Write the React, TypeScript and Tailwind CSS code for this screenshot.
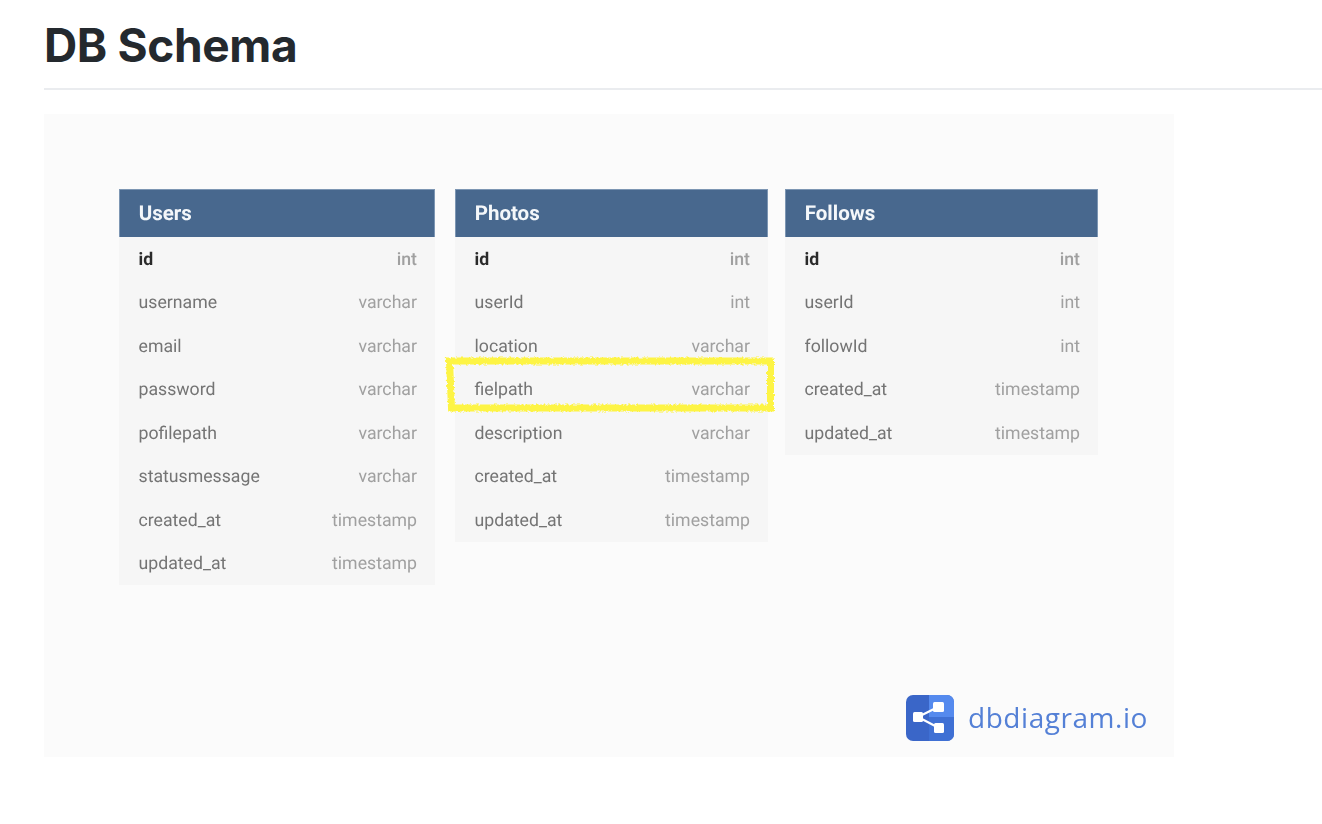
const tables = [
  {
    name: "Users",
    cls: "w-[316px]",
    rows: [
      ["id", "int"],
      ["username", "varchar"],
      ["email", "varchar"],
      ["password", "varchar"],
      ["pofilepath", "varchar"],
      ["statusmessage", "varchar"],
      ["created_at", "timestamp"],
      ["updated_at", "timestamp"],
    ],
  },
  {
    name: "Photos",
    cls: "w-[313px] ml-[20px]",
    rows: [
      ["id", "int"],
      ["userId", "int"],
      ["location", "varchar"],
      ["fielpath", "varchar"],
      ["description", "varchar"],
      ["created_at", "timestamp"],
      ["updated_at", "timestamp"],
    ],
  },
  {
    name: "Follows",
    cls: "w-[313px] ml-[17px]",
    rows: [
      ["id", "int"],
      ["userId", "int"],
      ["followId", "int"],
      ["created_at", "timestamp"],
      ["updated_at", "timestamp"],
    ],
  },
];

function Table({ t }: { t: (typeof tables)[number] }) {
  return (
    <div className={`${t.cls} self-start bg-[#f6f6f6] [text-rendering:geometricPrecision]`}>
      <div className="h-[48px] flex items-center pl-[18.7px] pt-[1px] bg-[#48688e] border border-[#7d96b3] border-b-0 text-[#f4f7fa] font-bold text-[20.5px]">
        <span className="blur-[0.6px]">{t.name}</span>
      </div>
      {t.rows.map(([a, b], i) => (
        <div key={i} className="h-[43.5px] flex items-center justify-between pl-[19.5px] pr-[18px] pt-[3px] text-[17.7px] blur-[0.6px]">
          <span className={i === 0 ? "font-bold text-[#2a2a2a]" : "text-[#747474]"}>{a}</span>
          <span className={i === 0 ? "text-[#a0a0a0] font-medium" : "text-[#a0a0a0]"}>{b}</span>
        </div>
      ))}
    </div>
  );
}

function Logo() {
  return (
    <svg width="48" height="46" viewBox="0 0 48 46" className="shrink-0 blur-[0.5px]">
      <defs>
        <clipPath id="c">
          <rect x="0" y="0" width="48" height="46" rx="7" />
        </clipPath>
      </defs>
      <g clipPath="url(#c)">
        <rect width="48" height="46" fill="#3a66c8" />
        <rect x="23" width="25" height="22" fill="#558aee" />
        <rect x="23" y="22" width="25" height="24" fill="#3f70d4" />
      </g>
      <path d="M12 22 L32 12 M12 22 L33 33" stroke="#fff" strokeWidth="2.2" fill="none" />
      <rect x="7" y="17" width="10" height="10" rx="1.5" fill="#fff" />
      <rect x="27" y="7" width="11" height="10" rx="1.5" fill="#fff" />
      <rect x="28" y="28" width="10" height="10" rx="1.5" fill="#fff" />
    </svg>
  );
}

export default function App() {
  return (
    <div className="h-[824px] bg-white pl-[44px] pt-[16px] overflow-hidden font-['Inter',sans-serif]">
      <h1 className="text-[46px] leading-[58px] font-bold text-[#24292e] tracking-[-0.35px]">DB Schema</h1>
      <div className="mt-[14px] h-[2px] bg-[#eaecef]" />
      <div className="relative mt-[24px] w-[1130px] h-[643px] bg-[#fbfbfb] pt-[75px] pl-[75px] flex font-['Roboto',sans-serif]">
        {tables.map((t) => (
          <Table key={t.name} t={t} />
        ))}
        <svg className="absolute left-[400px] top-[241px]" width="334" height="60" viewBox="0 0 334 60">
          <defs>
            <filter id="rough" x="-5%" y="-20%" width="110%" height="140%">
              <feTurbulence type="fractalNoise" baseFrequency="0.4" numOctaves="2" seed="3" />
              <feDisplacementMap in="SourceGraphic" scale="4" />
            </filter>
          </defs>
          <path d="M5.5 6 L326.5 6 L326.5 53 L7.5 53 Z" fill="none" stroke="#fdf445" strokeWidth="7" filter="url(#rough)" />
        </svg>
        <div className="absolute right-[26px] bottom-[16px] flex items-center gap-[14px]">
          <Logo />
          <span className="font-['Open_Sans',sans-serif] font-medium text-[28px] leading-none text-[#5480d6] tracking-[0.55px] blur-[0.5px] pb-[2px]">dbdiagram.io</span>
        </div>
      </div>
    </div>
  );
}
